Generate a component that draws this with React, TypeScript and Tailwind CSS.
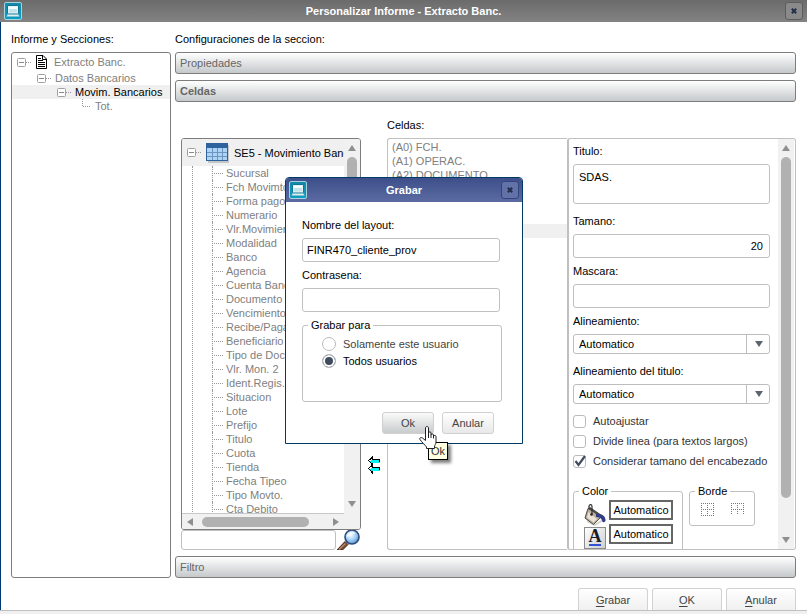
import React, { useState } from "react";

const reportFields = [
  "Sucursal",
  "Fch Movimto",
  "Forma pago",
  "Numerario",
  "Vlr.Movimien",
  "Modalidad",
  "Banco",
  "Agencia",
  "Cuenta Banc",
  "Documento",
  "Vencimiento",
  "Recibe/Paga",
  "Beneficiario",
  "Tipo de Doc.",
  "Vlr. Mon. 2",
  "Ident.Regis.",
  "Situacion",
  "Lote",
  "Prefijo",
  "Titulo",
  "Cuota",
  "Tienda",
  "Fecha Tipeo",
  "Tipo Movto.",
  "Cta Debito",
];

const cells = ["(A0) FCH.", "(A1) OPERAC.", "(A2) DOCUMENTO"];

function AppIcon() {
  return (
    <svg width="18" height="18" viewBox="0 0 18 18" className="shrink-0" aria-hidden="true">
      <defs>
        <linearGradient id="teal" x1="0" y1="0" x2="0" y2="1">
          <stop offset="0" stopColor="#1587a8" />
          <stop offset="1" stopColor="#0aa0c4" />
        </linearGradient>
      </defs>
      <rect x="0.5" y="0.5" width="17" height="17" rx="1.5" fill="url(#teal)" stroke="#a8d3de" />
      <rect x="3.5" y="3.5" width="11" height="8.5" rx="0.5" fill="#e6f3f6" stroke="#0d7896" />
      <rect x="5" y="5" width="8" height="5.5" fill="#c3e3ea" />
      <rect x="5" y="5" width="8" height="2" fill="#f6fcfd" />
      <path d="M3.500 12.500h11l0.800 2H2.700z" fill="#e3eef1" stroke="#7fb9c8" strokeWidth="0.500" />
    </svg>
  );
}

function CloseButton({ tone }: { tone: "gray" | "blue" }) {
  return (
    <button
      type="button"
      aria-label="Cerrar"
      className={
        tone === "gray"
          ? "flex size-[18px] shrink-0 items-center justify-center rounded-[3px] border border-[#5c5c5c] bg-[#8a8a8a]"
          : "flex size-[18px] shrink-0 items-center justify-center rounded-[3px] border border-[#33437c] bg-[#6272a8]"
      }
    >
      <svg width="6" height="6" viewBox="0 0 6 6" aria-hidden="true">
        <path d="M0.8 0.8L5.2 5.2M5.2 0.8L0.8 5.2" stroke="#232e4d" strokeWidth="2" />
      </svg>
    </button>
  );
}

function Expander() {
  return (
    <svg width="14" height="9" viewBox="0 0 14 9" className="shrink-0" aria-hidden="true">
      <rect x="0.5" y="0.5" width="8" height="8" rx="1" fill="#fff" stroke="#a0a0a0" />
      <path d="M2 4.5h5" stroke="#888" />
      <path d="M9 4.5h5" stroke="#999" strokeDasharray="1 1" />
    </svg>
  );
}

function Branch() {
  return (
    <svg width="10" height="14" viewBox="0 0 10 14" className="shrink-0" aria-hidden="true">
      <path d="M1 7.5h9" fill="none" stroke="#999" strokeDasharray="1 1" />
    </svg>
  );
}

function DocumentIcon() {
  return (
    <svg width="11" height="14" viewBox="0 0 11 14" className="shrink-0" aria-hidden="true">
      <path d="M0.5 0.5h6.5l3.5 3.5v9.5h-10z" fill="#fff" stroke="#000" />
      <path d="M6.5 0.5v4h4" fill="none" stroke="#000" />
      <path d="M2 3.5h3M2 5.5h5M2 7.5h7M2 9.5h7M2 11.5h7" stroke="#000" />
    </svg>
  );
}

function TableIcon() {
  return (
    <svg width="24" height="20" viewBox="0 0 24 20" className="shrink-0" aria-hidden="true">
      <rect x="2" y="2" width="21" height="18" fill="#c4c6c9" />
      <rect x="0.5" y="0.5" width="21" height="17" fill="#aed4f5" stroke="#2f639e" />
      <rect x="0" y="0" width="22" height="5" fill="#2f639e" />
      <path d="M1 9.5h20M1 13.5h20M6.5 5v12M11.5 5v12M16.5 5v12" stroke="#6b96c0" />
    </svg>
  );
}

function SearchIcon() {
  return (
    <svg width="24" height="20" viewBox="0 0 24 20" aria-hidden="true">
      <defs>
        <radialGradient id="lens" cx="0.4" cy="0.35" r="0.7">
          <stop offset="0" stopColor="#fff" />
          <stop offset="0.5" stopColor="#a9d3f6" />
          <stop offset="1" stopColor="#4c8fd6" />
        </radialGradient>
      </defs>
      <path d="M1 20L9 11.500l3 3L6.500 20z" fill="#7a4b33" stroke="#3f2a20" />
      <path d="M3 19.500l6.500-6" stroke="#b98a6c" strokeWidth="1.200" />
      <circle cx="16" cy="7" r="7" fill="url(#lens)" stroke="#2c4a7a" strokeWidth="1.600" />
      <path d="M11.500 6.500c1-3 4-4.500 7-3" fill="none" stroke="#fff" strokeWidth="1.400" />
    </svg>
  );
}

function TransferArrows() {
  return (
    <svg width="13" height="19" viewBox="0 0 13 19" shapeRendering="crispEdges" aria-hidden="true">
      <path d="M1 5h11v1H1zM3 4h9v3H3z" fill="#00f5f5" />
      <path d="M1 13h11v1H1zM3 12h9v3H3z" fill="#00f5f5" />
      <path
        d="M4 0h1v3H4zM3 1h1v2H3zM2 2h1v2H2zM1 3h1v1H1zM0 4h1v1H0zM1 5h1v1H1zM2 6h1v1H2zM3 7h1v2H3zM4 7h1v3H4zM4 3h8v1H4zM11 4h1v2h-1z"
        fill="#000"
      />
      <path
        d="M4 9h1v3H4zM3 9h1v2H3zM2 10h1v1H2zM1 11h1v1H1zM0 12h1v1H0zM1 13h1v1H1zM2 14h1v1H2zM3 15h1v2H3zM4 15h1v3H4zM4 11h8v1H4zM11 12h1v2h-1z"
        fill="#000"
      />
    </svg>
  );
}

function Triangle({ dir }: { dir: "up" | "down" | "left" | "right" }) {
  const shapes = { up: "4,1 8,7 0,7", down: "0,1 8,1 4,7", left: "1,4 7,0 7,8", right: "7,4 1,0 1,8" };
  return (
    <svg width="8" height="8" viewBox="0 0 8 8" aria-hidden="true">
      <polygon points={shapes[dir]} fill="#8f8f8f" />
    </svg>
  );
}

function VerticalScrollbar({ short }: { short?: boolean }) {
  return (
    <div className="flex w-4 shrink-0 flex-col items-center bg-[#f1f1f1] py-[5px]">
      <Triangle dir="up" />
      <div className="flex w-2.5 flex-1 flex-col pt-[5px] pb-[38px]">
        <div className={"rounded-full bg-[#b1b1b1] " + (short ? "h-3/5" : "h-full")} />
      </div>
      <Triangle dir="down" />
    </div>
  );
}

function SectionBar({ title, strong }: { title: string; strong?: boolean }) {
  return (
    <button
      type="button"
      className={
        "h-[22px] w-full shrink-0 rounded-[3px] border border-[#7d7d7d] bg-linear-to-b from-white to-[#c5c9cb] px-1 text-left text-[#666] " +
        (strong ? "font-bold" : "")
      }
    >
      {title}
    </button>
  );
}

const inputClass = "block h-6 w-full rounded-[3px] border border-[#c0c0c0] bg-white px-1 text-black outline-none";

function SelectField({ id, label }: { id: string; label: string }) {
  return (
    <div className="mb-2.5">
      <label htmlFor={id} className="mb-1.5 block">
        {label}
      </label>
      <div className="relative">
        <select
          id={id}
          className="block h-5 w-full appearance-none rounded-[3px] border border-[#bdbdbd] bg-white pr-6 pl-[5px] text-black outline-none"
        >
          <option>Automatico</option>
          <option>Izquierda</option>
          <option>Derecha</option>
        </select>
        <span className="pointer-events-none absolute inset-y-0 right-0 flex w-6 items-center justify-center border-l border-[#bdbdbd]">
          <svg width="8" height="6" viewBox="0 0 8 6" aria-hidden="true">
            <path d="M0 0h8L4 6z" fill="#5d6470" />
          </svg>
        </span>
      </div>
    </div>
  );
}

function CheckRow({ label, initial }: { label: string; initial?: boolean }) {
  const [on, setOn] = useState(!!initial);
  return (
    <label className="flex h-5 items-center gap-[7px] text-[#333]">
      <span className="grid size-[13px] place-items-center">
        <input
          type="checkbox"
          checked={on}
          onChange={() => setOn(!on)}
          className="col-start-1 row-start-1 size-[13px] appearance-none rounded-[3px] border border-[#bbb] bg-white"
        />
        {on && (
          <svg width="13" height="13" viewBox="0 0 13 13" className="pointer-events-none col-start-1 row-start-1" aria-hidden="true">
            <path d="M2.500 6l3 4L12 1" fill="none" stroke="#414b60" strokeWidth="2.200" />
          </svg>
        )}
      </span>
      {label}
    </label>
  );
}

function BucketIcon() {
  return (
    <svg width="22" height="22" viewBox="0 0 22 22" className="shrink-0" aria-hidden="true">
      <path d="M3 17l8 4 8-5" fill="none" stroke="#d5d5d5" strokeWidth="2" />
      <path d="M4 4.500L1 14l8.500 6.500L18 12z" fill="#b9ae9c" stroke="#4d4943" />
      <path d="M4.500 8L3 13.500l6.500 5L13 15z" fill="#e9e2d5" />
      <path d="M4 4.500L6 3l12.500 8.500-1.500 2z" fill="#4c4a48" />
      <path d="M5 5V2.500C5 0 8 0 8 2.500V10" fill="none" stroke="#333" strokeWidth="1.200" />
      <circle cx="7.500" cy="10.500" r="1.300" fill="#222" />
      <path d="M12 10c5 0 9 1 9.500 5.500 0.500 3-3 4-3.500 1-0.500-2.500-3-3.500-6-3.500z" fill="#333d87" />
    </svg>
  );
}

function FontColorIcon() {
  return (
    <span className="flex size-[22px] shrink-0 flex-col items-center border border-[#8b8b8b] bg-linear-to-br from-white to-[#cfcfcf] pt-px">
      <span className="font-['Liberation_Serif',serif] text-[18px] leading-[15px] font-bold text-[#1c1c28]">A</span>
      <span className="h-0.5 w-3 bg-[#2f55d4]" />
    </span>
  );
}

function BorderIcon({ bottom }: { bottom: boolean }) {
  return (
    <svg width="13" height="13" viewBox="0 0 13 13" aria-hidden="true">
      <path
        d={bottom ? "M0 0.500h13M0 6.500h13M0 12.500h13M0.500 0v13M6.500 0v13M12.500 0v13" : "M0 0.500h13M0 6.500h13M0.500 0v11M6.500 0v11M12.500 0v11"}
        stroke="#777"
        strokeDasharray="1 1"
        fill="none"
      />
    </svg>
  );
}

function FooterButton({ first, rest }: { first: string; rest: string }) {
  return (
    <button
      type="button"
      className="h-[22px] w-[70px] rounded-t-[3px] border border-b-0 border-[#d2d2d2] bg-linear-to-b from-white to-[#f0f0f0] text-[#444]"
    >
      <span className="underline underline-offset-2">{first}</span>
      {rest}
    </button>
  );
}

function SectionsTree() {
  return (
    <ul className="flex-1 overflow-hidden rounded-[3px] border border-[#7d7d7d] text-[#808080]">
      <li className="flex h-[18px] items-center pl-[5px]">
        <Expander />
        <span className="ml-[5px] flex items-center gap-[7px]">
          <DocumentIcon />
          Extracto Banc.
        </span>
      </li>
      <li className="flex h-3.5 items-center gap-1 pl-[25px]">
        <Expander />
        Datos Bancarios
      </li>
      <li className="flex h-3.5 items-center gap-1 bg-[#f0f0f0] pl-[45px] text-black">
        <Expander />
        Movim. Bancarios
      </li>
      <li className="flex h-3.5 items-center gap-1 pl-[70px]">
        <svg width="9" height="14" viewBox="0 0 9 14" aria-hidden="true">
          <path d="M0.500 0v7.500h9" fill="none" stroke="#999" strokeDasharray="1 1" />
        </svg>
        Tot.
      </li>
    </ul>
  );
}

function FieldsTree() {
  return (
    <div className="flex min-h-0 flex-1 flex-col overflow-hidden rounded-[3px] border border-[#7d7d7d]">
      <div className="flex min-h-0 flex-1">
        <div className="min-w-0 flex-1 overflow-hidden whitespace-nowrap">
          <div className="flex h-[27px] items-center bg-[#f0f0f0] pl-[5px] text-black">
            <Expander />
            <span className="ml-[5px] flex items-center gap-1">
              <TableIcon />
              SE5 - Movimiento Banc
            </span>
          </div>
          <ul className="ml-2.5 border-l border-dotted border-[#999] pl-[19px] text-[#808080]">
            {reportFields.map((f) => (
              <li key={f} className="flex h-3.5 items-center gap-[3px] border-l border-dotted border-[#999]">
                <Branch />
                {f}
              </li>
            ))}
          </ul>
        </div>
        <VerticalScrollbar short />
      </div>
      <div className="flex h-4 shrink-0 bg-[#f1f1f1]">
        <div className="flex flex-1 items-center border-t border-[#c8c8c8] px-1">
          <Triangle dir="left" />
          <div className="mr-[23px] ml-2 h-2.5 flex-1 rounded-full bg-[#b1b1b1]" />
          <Triangle dir="right" />
        </div>
        <div className="w-4" />
      </div>
    </div>
  );
}

function PropertiesPanel() {
  return (
    <div className="flex w-[229px] shrink-0 overflow-hidden rounded-[3px] border border-l-2 border-[#c0c0c0]">
      <div className="min-w-0 flex-1 overflow-hidden pt-[5px] pr-2 pl-1">
        <label htmlFor="titulo" className="mb-1.5 block">
          Titulo:
        </label>
        <textarea
          id="titulo"
          defaultValue="SDAS."
          className="mb-2.5 block h-10 w-full resize-none rounded-[3px] border border-[#c0c0c0] px-[5px] py-[5px] text-black outline-none"
        />
        <label htmlFor="tamano" className="mb-1.5 block">
          Tamano:
        </label>
        <input id="tamano" defaultValue="20" className={inputClass + " mb-1.5 pr-1.5 text-right"} />
        <label htmlFor="mascara" className="mb-1.5 block">
          Mascara:
        </label>
        <input id="mascara" className={inputClass + " mb-1.5"} />
        <SelectField id="alineamiento" label="Alineamiento:" />
        <SelectField id="alineamiento-titulo" label="Alineamiento del titulo:" />
        <div className="-mt-[3px]">
          <CheckRow label="Autoajustar" />
          <CheckRow label="Divide linea (para textos largos)" />
          <CheckRow label="Considerar tamano del encabezado" initial />
        </div>
        <div className="mt-[13px] flex items-start gap-1.5">
          <fieldset className="h-20 w-[110px] shrink-0 rounded-[3px] border border-[#c0c0c0] pl-2.5">
            <legend className="-ml-[5px] px-[3px]">Color</legend>
            <div className="flex flex-col gap-0.5 pt-0.5">
              <div className="flex items-start gap-[3px]">
                <span className="pt-1">
                  <BucketIcon />
                </span>
                <button type="button" className="h-5 w-16 border-2 border-[#666] bg-white">
                  Automatico
                </button>
              </div>
              <div className="-mt-1 flex items-start gap-[3px]">
                <span className="pt-[3px]">
                  <FontColorIcon />
                </span>
                <button type="button" className="h-5 w-16 border-2 border-[#666] bg-white">
                  Automatico
                </button>
              </div>
            </div>
          </fieldset>
          <fieldset className="h-[42px] w-[66px] shrink-0 rounded-[3px] border border-[#c0c0c0] pl-[11px]">
            <legend className="-ml-[6px] px-[3px]">Borde</legend>
            <div className="flex gap-[17px] pt-[5px]">
              <BorderIcon bottom />
              <BorderIcon bottom={false} />
            </div>
          </fieldset>
        </div>
      </div>
      <div className="flex pr-px">
        <VerticalScrollbar />
      </div>
    </div>
  );
}

function RadioRow({ label, checked, onSelect }: { label: string; checked: boolean; onSelect: () => void }) {
  return (
    <label className={"flex h-[17px] items-center gap-[7px] " + (checked ? "text-black" : "text-[#444]")}>
      <input
        type="radio"
        name="grabar-para"
        checked={checked}
        onChange={onSelect}
        className="size-3.5 appearance-none rounded-full border border-[#bbb] bg-white checked:bg-[#414b60] checked:shadow-[inset_0_0_0_2px_white]"
      />
      {label}
    </label>
  );
}

function SaveDialog() {
  const [target, setTarget] = useState("todos");
  return (
    <div
      role="dialog"
      aria-label="Grabar"
      className="absolute top-[177px] left-[285px] w-[238px] rounded-t-[4px] border border-[#003a66] bg-white text-black"
    >
      <div className="flex h-6 items-center rounded-t-[3px] bg-linear-to-b from-[#3d4f8a] to-[#5c6ba2] px-[3px]">
        <AppIcon />
        <h2 className="flex-1 text-center font-bold text-white">Grabar</h2>
        <CloseButton tone="blue" />
      </div>
      <div className="px-4 pt-4 pb-[9px]">
        <div className="pr-1.5">
          <label htmlFor="layout" className="mb-1.5 block">
            Nombre del layout:
          </label>
          <input id="layout" defaultValue="FINR470_cliente_prov" className={inputClass + " mb-1.5"} />
          <label htmlFor="contrasena" className="mb-1.5 block">
            Contrasena:
          </label>
          <input id="contrasena" type="password" className={inputClass + " mb-1.5"} />
        </div>
        <fieldset className="-mr-1 h-[84px] w-[200px] rounded-[3px] border border-[#c0c0c0] pt-[3px] pl-[19px]">
          <legend className="-ml-[14px] px-[3px]">Grabar para</legend>
          <RadioRow label="Solamente este usuario" checked={target === "este"} onSelect={() => setTarget("este")} />
          <RadioRow label="Todos usuarios" checked={target === "todos"} onSelect={() => setTarget("todos")} />
        </fieldset>
        <div className="mt-2.5 flex justify-end gap-2 pr-3">
          <button
            type="button"
            className="h-[22px] w-[52px] rounded-[3px] border border-[#d0d0d0] bg-linear-to-b from-[#fafafa] to-[#c8cccd] text-[#444]"
          >
            Ok
          </button>
          <button
            type="button"
            className="h-[22px] w-[52px] rounded-[3px] border border-[#d0d0d0] bg-linear-to-b from-white to-[#e8e8e8] text-[#444]"
          >
            Anular
          </button>
        </div>
      </div>
      <div
        role="tooltip"
        className="absolute top-[264px] left-[142px] border border-black bg-[#ffffe1] px-0.5 py-px text-[#333] shadow-[3px_3px_3px_rgba(0,0,0,0.5)]"
      >
        Ok
      </div>
      <svg width="18" height="23" viewBox="0 0 18 23" className="absolute top-[248px] left-[133px]" aria-hidden="true">
        <path
          d="M6.500 14.500V2c0-2 3-2 3 0v6.500V7c0-1.500 2.500-1.500 2.500 0v2c0-1.500 2.500-1.500 2.500 0v1.500c0-1.500 2.500-1.500 2.500 0V16c0 2-1.500 3-1.500 5v1.500H7.500V21C5.500 18.500 3.500 17 1 13.500c-1-1.500 1-2.500 2.500-1.500z"
          fill="#fff"
          stroke="#222"
        />
        <path d="M9.500 8v4M12 9v3M14.500 10v2.500" stroke="#222" />
      </svg>
    </div>
  );
}

export default function App() {
  return (
    <div className="relative flex h-screen flex-col bg-white font-['Liberation_Sans',Arial,sans-serif] text-[11px] leading-[14px] text-black">
      <header className="flex h-[22px] shrink-0 items-center bg-linear-to-b from-[#6b6b6b] to-[#838383] px-1">
        <AppIcon />
        <h1 className="flex-1 text-center font-bold text-white">Personalizar Informe - Extracto Banc.</h1>
        <CloseButton tone="gray" />
      </header>

      <div className="flex min-h-0 flex-1 flex-col border-l border-[#003a70] pr-[11px] pl-2.5">
        <main className="flex min-h-0 flex-1 gap-1 pt-2.5">
          <section className="flex w-40 shrink-0 flex-col gap-1.5">
            <h2>Informe y Secciones:</h2>
            <SectionsTree />
          </section>

          <section className="flex min-w-0 flex-1 flex-col gap-1.5">
            <h2>Configuraciones de la seccion:</h2>
            <SectionBar title="Propiedades" />
            <SectionBar title="Celdas" strong />
            <div className="flex min-h-0 flex-1 pt-2.5 pl-1.5">
              <div className="flex w-[180px] shrink-0 flex-col pt-5">
                <FieldsTree />
                <div className="flex h-5 shrink-0">
                  <input
                    aria-label="Buscar"
                    className="h-5 min-w-0 flex-1 rounded-[3px] border border-[#c0c0c0] px-1 outline-none"
                  />
                  <button type="button" aria-label="Buscar campo" className="h-5 w-[25px]">
                    <SearchIcon />
                  </button>
                </div>
              </div>
              <button type="button" aria-label="Mover celdas" className="flex w-[26px] shrink-0 items-end justify-center pb-[75px]">
                <TransferArrows />
              </button>
              <div className="flex min-w-0 flex-1 flex-col gap-1.5">
                <h3>Celdas:</h3>
                <ul className="flex-1 overflow-hidden rounded-l-[3px] border border-r-0 border-[#c0c0c0] pt-px text-[#808080]">
                  {cells.map((c) => (
                    <li key={c} className="h-3.5 px-1">
                      {c}
                    </li>
                  ))}
                  <li className="mt-[42px] h-3.5 bg-[#f0f0f0]" />
                </ul>
              </div>
              <div className="flex pt-5">
                <PropertiesPanel />
              </div>
            </div>
            <SectionBar title="Filtro" />
          </section>
        </main>

        <footer className="mt-2.5 flex shrink-0 justify-end gap-1">
          <FooterButton first="G" rest="rabar" />
          <FooterButton first="O" rest="K" />
          <FooterButton first="A" rest="nular" />
        </footer>
      </div>
      <div className="h-1 shrink-0 border-t border-[#c0c0c0] bg-[#f0f0f0]" />

      <SaveDialog />
    </div>
  );
}
